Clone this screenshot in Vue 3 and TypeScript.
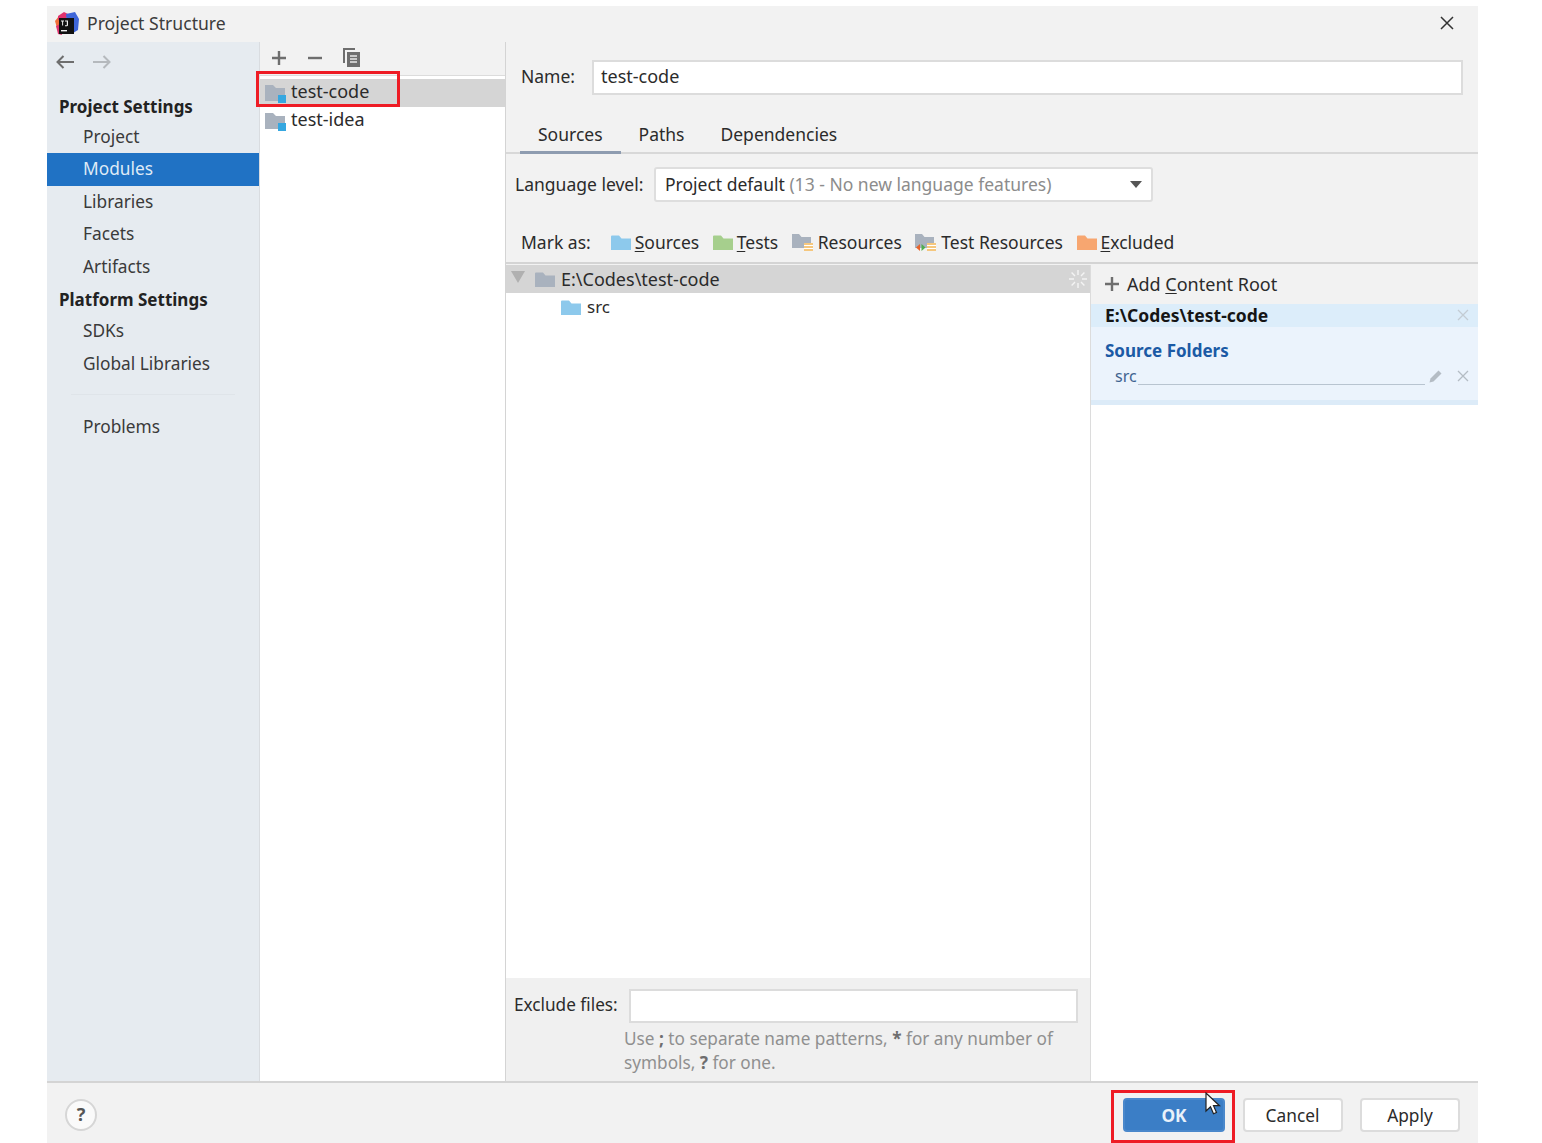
<script setup lang="ts">
interface NavItem {
  label: string;
  kind: "title" | "item" | "gap";
  active?: boolean;
}

const navItems: NavItem[] = [
  { label: "Project", kind: "item" },
  { label: "Modules", kind: "item", active: true },
  { label: "Libraries", kind: "item" },
  { label: "Facets", kind: "item" },
  { label: "Artifacts", kind: "item" },
  { label: "Platform Settings", kind: "title" },
  { label: "SDKs", kind: "item" },
  { label: "Global Libraries", kind: "item" },
  { label: "", kind: "gap" },
  { label: "Problems", kind: "item" },
];

const tabs = ["Sources", "Paths", "Dependencies"];

const folder = "M0 1.5A1 1 0 0 1 1 .5h7l2.5 3H20v11.5H0z";
</script>

<template>
  <div class="dialog">
    <header class="titlebar">
      <svg class="logo" width="24" height="24" viewBox="0 0 24 24">
        <path d="M0 9 4 4l3 1-1 10-4 1z" fill="#f0703a" />
        <path d="M3 4 9 0l4 2-2 6H3z" fill="#e0336e" />
        <path d="M11 2l9-2 4 7-1 11-5 3-6-10z" fill="#3f66d8" />
        <path d="M1 14l4-2 2 11-4-1z" fill="#e0336e" />
        <rect x="4" y="6" width="15" height="16" fill="#111" />
        <rect x="6" y="18" width="6" height="1.400" fill="#eee" />
        <path d="M6 8.500h3v1H8.100v4h-1v-4H6zM10 8.500h3v4.500a1.200 1.200 0 0 1-1.200 1.200H10v-1h1.800V9.500H10z" fill="#eee" />
      </svg>
      <span class="title-text">Project Structure</span>
      <svg class="close" width="16" height="16" viewBox="0 0 16 16">
        <path d="M2 2l12 12M14 2 2 14" stroke="#333" stroke-width="1.500" fill="none" />
      </svg>
    </header>

    <div class="body">
      <aside class="sidebar">
        <div class="history">
          <svg width="20" height="16" viewBox="0 0 20 16">
            <path d="M19 8H2M8.500 2 2.500 8l6 6" stroke="#6e6e6e" stroke-width="2" fill="none" />
          </svg>
          <svg width="20" height="16" viewBox="0 0 20 16">
            <path d="M1 8h17M11.500 2l6 6-6 6" stroke="#b5b9bd" stroke-width="2" fill="none" />
          </svg>
        </div>
        <div class="nav-title first">Project Settings</div>
        <template v-for="item in navItems" :key="item.label">
          <div v-if="item.kind === 'gap'" class="nav-gap"></div>
          <div v-else-if="item.kind === 'title'" class="nav-title">{{ item.label }}</div>
          <div v-else class="nav-item" :class="{ active: item.active }">{{ item.label }}</div>
        </template>
      </aside>

      <section class="modules">
        <div class="module-tools">
          <svg width="16" height="16" viewBox="0 0 16 16">
            <path d="M8 1v14M1 8h14" stroke="#6e6e6e" stroke-width="2.400" />
          </svg>
          <svg width="16" height="16" viewBox="0 0 16 16">
            <path d="M1 8h14" stroke="#6e6e6e" stroke-width="2.400" />
          </svg>
          <svg width="18" height="20" viewBox="0 0 18 20">
            <path d="M1 15V1h11" stroke="#6e6e6e" stroke-width="2" fill="none" />
            <path d="M4 4h13v15H4z" fill="#6e6e6e" />
            <path d="M7 8h7M7 11h7M7 14h7" stroke="#e8e8e8" stroke-width="1.300" />
          </svg>
        </div>
        <div class="module-row selected">
          <svg class="module-icon" width="22" height="20" viewBox="0 0 22 20">
            <path d="M0 2h8l3 3h9v13H0z" fill="#a9b2be" />
            <rect x="13" y="12" width="8" height="8" fill="#35a7e0" />
          </svg>
          <span>test-code</span>
        </div>
        <div class="module-row">
          <svg class="module-icon" width="22" height="20" viewBox="0 0 22 20">
            <path d="M0 2h8l3 3h9v13H0z" fill="#a9b2be" />
            <rect x="13" y="12" width="8" height="8" fill="#35a7e0" />
          </svg>
          <span>test-idea</span>
        </div>
        <div class="callout callout-module"></div>
      </section>

      <main class="detail">
        <div class="name-row">
          <label class="name-label">Name:</label>
          <div class="text-box name-box">test-code</div>
        </div>

        <nav class="tabs">
          <div v-for="(tab, i) in tabs" :key="tab" class="tab" :class="{ current: i === 0 }">{{ tab }}</div>
        </nav>

        <div class="lang-row">
          <label>Language level:</label>
          <div class="combo">
            <span class="combo-text">Project default <span class="muted">(13 - No new language features)</span></span>
            <i class="caret"></i>
          </div>
        </div>

        <div class="mark-row">
          <span class="mark-label">Mark as:</span>
          <span class="mark">
            <svg width="20" height="15" viewBox="0 0 20 15"><path :d="folder" fill="#8dc9ec" /></svg>
            <span><u>S</u>ources</span>
          </span>
          <span class="mark">
            <svg width="20" height="15" viewBox="0 0 20 15"><path :d="folder" fill="#a6cf8d" /></svg>
            <span><u>T</u>ests</span>
          </span>
          <span class="mark">
            <svg width="22" height="19" viewBox="0 0 22 19">
              <path d="M0 1h7l2.500 3H19v11H0z" fill="#a9b2be" />
              <path d="M12 10h9v8h-9z" fill="#f5c77e" />
              <path d="M12 12.500h9M12 15.500h9" stroke="#fff" />
            </svg>
            <span>Resources</span>
          </span>
          <span class="mark">
            <svg width="22" height="19" viewBox="0 0 22 19">
              <path d="M0 1h7l2.500 3H19v11H0z" fill="#a9b2be" />
              <path d="M12 10h9v8h-9z" fill="#f5c77e" />
              <path d="M12 12.500h9M12 15.500h9" stroke="#fff" />
              <path d="M5 11 1 14.500 5 18z" fill="#e8642c" />
              <path d="M6.500 11l4 3.500-4 3.500z" fill="#4fae4e" />
            </svg>
            <span>Test Resources</span>
          </span>
          <span class="mark">
            <svg width="20" height="15" viewBox="0 0 20 15"><path :d="folder" fill="#f7a670" /></svg>
            <span><u>E</u>xcluded</span>
          </span>
        </div>

        <div class="workspace">
          <div class="tree-col">
            <div class="tree-scroll">
              <div class="tree-row root">
                <i class="tree-caret"></i>
                <svg width="20" height="15" viewBox="0 0 20 15"><path :d="folder" fill="#a9b2be" /></svg>
                <span>E:\Codes\test-code</span>
                <svg class="spinner" width="20" height="20" viewBox="0 0 20 20">
                  <g stroke="#f4f4f4" stroke-width="1.400">
                    <path d="M10 1v5M10 14v5M1 10h5M14 10h5M3.600 3.600 7 7M13 13l3.400 3.400M16.400 3.600 13 7M7 13l-3.400 3.400" />
                  </g>
                </svg>
              </div>
              <div class="tree-row child">
                <svg width="20" height="15" viewBox="0 0 20 15"><path :d="folder" fill="#8dc9ec" /></svg>
                <span>src</span>
              </div>
            </div>
            <div class="exclude">
              <div class="exclude-line">
                <label>Exclude files:</label>
                <div class="text-box exclude-box"></div>
              </div>
              <div class="hint">
                <div>Use <b>;</b> to separate name patterns, <b>*</b> for any number of</div>
                <div>symbols, <b>?</b> for one.</div>
              </div>
            </div>
          </div>

          <div class="roots-col">
            <div class="add-root">
              <svg width="16" height="16" viewBox="0 0 16 16">
                <path d="M8 1v14M1 8h14" stroke="#6e6e6e" stroke-width="2.400" />
              </svg>
              <span>Add <u>C</u>ontent Root</span>
            </div>
            <div class="root-head">
              <span>E:\Codes\test-code</span>
              <svg width="12" height="12" viewBox="0 0 12 12">
                <path d="M1 1l10 10M11 1 1 11" stroke="#c3ccd4" stroke-width="1.300" />
              </svg>
            </div>
            <div class="root-body">
              <div class="source-title">Source Folders</div>
              <div class="source-line">
                <span class="source-name">src</span>
                <span class="source-rule"></span>
                <svg width="16" height="16" viewBox="0 0 16 16">
                  <path d="M1.500 14.500l1-4L10.500 2.500l3 3-8 8z" fill="#b4bcc4" />
                </svg>
                <svg width="12" height="12" viewBox="0 0 12 12">
                  <path d="M1 1l10 10M11 1 1 11" stroke="#b4bcc4" stroke-width="1.300" />
                </svg>
              </div>
            </div>
          </div>
        </div>
      </main>
    </div>

    <footer class="footer">
      <div class="help">?</div>
      <div class="buttons">
        <button class="btn primary">OK</button>
        <button class="btn">Cancel</button>
        <button class="btn">Apply</button>
      </div>
      <div class="callout callout-ok"></div>
      <svg class="cursor" width="16" height="24" viewBox="0 0 16 24">
        <path d="M1 1v18l4.500-4.200 3 7 3-1.300-3-6.800H14.500z" fill="#fff" stroke="#222" stroke-width="1.200" />
      </svg>
    </footer>
  </div>
</template>

<style>
html,
body {
  background: #fff;
  overflow: hidden;
}
</style>

<style scoped>
.dialog {
  box-sizing: border-box;
  width: 1431px;
  height: 1137px;
  margin: 6px 0 0 47px;
  display: flex;
  flex-direction: column;
  background: #f2f2f2;
  color: #2b2b2b;
  font-family: "Noto Sans", "Open Sans", sans-serif;
  font-size: 17.500px;
  position: relative;
}

svg {
  flex: none;
  display: block;
}

u {
  text-underline-offset: 2px;
}

.titlebar {
  height: 36px;
  flex: none;
  display: flex;
  align-items: center;
  padding: 0 23px 0 8px;
}

.logo {
  margin: -1px 8px 0 0;
}

.title-text {
  color: #3c3c3c;
  font-size: 17.600px;
  margin-bottom: 3px;
}

.close {
  margin: 0 0 2px auto;
}

.body {
  flex: 1;
  min-height: 0;
  display: flex;
}

.sidebar {
  width: 212px;
  flex: none;
  background: #e6ebf0;
  border-right: 1px solid #d9dce0;
  font-size: 17.300px;
}

.history {
  height: 48px;
  display: flex;
  align-items: center;
  gap: 17px;
  padding: 0 0 8px 8px;
  box-sizing: border-box;
}

.nav-title {
  height: 32.400px;
  line-height: 33.400px;
  padding-left: 12px;
  font-size: 17px;
  font-weight: 700;
  color: #222;
}

.nav-title.first {
  height: 31px;
  line-height: 33px;
}

.nav-item {
  height: 32.400px;
  line-height: 32.400px;
  padding-left: 36px;
  color: #3a3a3a;
}

.nav-item.active {
  background: #2072c4;
  color: #dfeaf6;
}

.nav-gap {
  height: 31px;
  margin: 0 24px 0 24px;
  box-sizing: border-box;
  border-bottom: 1px solid #dfe4e9;
  transform: translateY(-16px);
}

.modules {
  width: 245px;
  flex: none;
  background: #fff;
  border-right: 1px solid #d4d4d4;
  position: relative;
  font-size: 18px;
}

.module-tools {
  height: 34px;
  box-sizing: border-box;
  background: #f2f2f2;
  border-bottom: 1px solid #dcdcdc;
  display: flex;
  align-items: center;
  gap: 20px;
  padding: 0 0 1px 11px;
  margin-bottom: 3px;
}

.module-row {
  height: 28px;
  display: flex;
  align-items: center;
  gap: 4px;
  padding-left: 5px;
  color: #2b2b2b;
}

.module-row span {
  margin-bottom: 4px;
}

.module-row.selected {
  background: #d5d5d5;
}

.callout {
  position: absolute;
  border: 3px solid #ee1c25;
  box-sizing: border-box;
}

.callout-module {
  left: -4px;
  top: 29px;
  width: 144px;
  height: 36px;
}

.detail {
  flex: 1;
  min-width: 0;
  display: flex;
  flex-direction: column;
}

.name-row {
  height: 70px;
  flex: none;
  box-sizing: border-box;
  display: flex;
  align-items: center;
  padding: 0 15px 0 15px;
}

.name-label {
  width: 71px;
  margin-bottom: 2px;
}

.text-box {
  box-sizing: border-box;
  background: #fff;
  border: 2px solid #dcdcdc;
}

.name-box {
  flex: 1;
  height: 35px;
  line-height: 29px;
  padding-left: 7px;
  font-size: 18px;
}

.tabs {
  height: 42px;
  flex: none;
  box-sizing: border-box;
  display: flex;
  padding-left: 14px;
  border-bottom: 2px solid #d8d8d8;
}

.tab {
  padding: 0 18px;
  height: 42px;
  line-height: 44px;
  box-sizing: border-box;
}

.tab.current {
  border-bottom: 3px solid #8e9cb0;
}

.lang-row {
  height: 62px;
  flex: none;
  box-sizing: border-box;
  display: flex;
  align-items: center;
  padding: 0 0 1px 9px;
}

.lang-row label {
  flex: none;
  width: 139px;
  margin-bottom: 2px;
}

.combo {
  box-sizing: border-box;
  width: 499px;
  height: 35px;
  padding: 0 9px;
  background: #fff;
  border: 2px solid #dedede;
  border-radius: 3px;
  display: flex;
  align-items: center;
  justify-content: space-between;
}

.combo-text {
  margin-bottom: 1px;
}

.muted {
  color: #8c8c8c;
}

.caret {
  width: 0;
  height: 0;
  border-left: 6px solid transparent;
  border-right: 6px solid transparent;
  border-top: 7px solid #555;
}

.mark-row {
  height: 48px;
  flex: none;
  box-sizing: border-box;
  display: flex;
  align-items: center;
  padding: 7px 0 0 15px;
  border-bottom: 2px solid #d4d4d4;
}

.mark-label {
  margin: 0 20px 2px 0;
}

.mark {
  display: flex;
  align-items: center;
  gap: 4px;
  margin-right: 13.500px;
}

.mark span {
  margin-bottom: 2px;
}

.workspace {
  flex: 1;
  min-height: 0;
  display: flex;
  margin-top: 1px;
}

.tree-col {
  width: 585px;
  flex: none;
  display: flex;
  flex-direction: column;
  border-right: 1px solid #dcdcdc;
  box-sizing: border-box;
}

.tree-scroll {
  flex: 1;
  min-height: 0;
  background: #fff;
}

.tree-row {
  height: 28px;
  display: flex;
  align-items: center;
  gap: 6px;
}

.tree-row.root {
  background: #d5d5d5;
  padding-left: 5px;
  position: relative;
  font-size: 18px;
}

.tree-row.child {
  padding-left: 55px;
  font-size: 17px;
}

.tree-row.child span {
  margin-bottom: 2px;
}

.tree-caret {
  width: 0;
  height: 0;
  border-left: 7px solid transparent;
  border-right: 7px solid transparent;
  border-top: 12px solid #b0b0b0;
  margin: -4px 4px 0 0;
}

.spinner {
  margin-left: auto;
  margin-right: 2px;
}

.exclude {
  height: 103px;
  flex: none;
  box-sizing: border-box;
  background: #f0f0f0;
  padding: 11px 12px 0 8px;
  font-size: 17.200px;
}

.exclude-line {
  display: flex;
  align-items: center;
}

.exclude-line label {
  flex: none;
  width: 115px;
  margin-top: -3px;
}

.exclude-box {
  flex: 1;
  height: 34px;
}

.hint {
  margin: 4px 0 0 110px;
  line-height: 24px;
  color: #8f8f8f;
}

.hint b {
  color: #6e6e6e;
}

.roots-col {
  flex: 1;
  min-width: 0;
  background: #fff;
}

.add-root {
  height: 39px;
  box-sizing: border-box;
  background: #f2f2f2;
  display: flex;
  align-items: center;
  gap: 7px;
  padding: 0 0 1px 13px;
  font-size: 18px;
}

.root-head {
  height: 23px;
  box-sizing: border-box;
  display: flex;
  align-items: center;
  justify-content: space-between;
  padding: 0 9px 2px 14px;
  background: #dcedfa;
  font-weight: 700;
  color: #151515;
}

.root-body {
  height: 78px;
  box-sizing: border-box;
  background: #ebf3fc;
  border-bottom: 5px solid #dcebf8;
  padding: 10px 9px 0 14px;
}

.source-title {
  font-weight: 700;
  font-size: 17px;
  color: #1b5aa5;
  line-height: 27px;
}

.source-line {
  display: flex;
  align-items: center;
  height: 24px;
}

.source-name {
  margin-left: 10px;
  color: #3f6390;
  font-size: 16px;
}

.source-rule {
  flex: 1;
  align-self: flex-end;
  margin: 0 3px 3px 1px;
  border-bottom: 1px solid #b8c4d0;
}

.source-line svg:last-child {
  margin-left: 13px;
}

.footer {
  height: 62px;
  flex: none;
  box-sizing: border-box;
  border-top: 2px solid #d4d4d4;
  display: flex;
  align-items: center;
  justify-content: space-between;
  padding: 4px 18px 0 18px;
  position: relative;
}

.help {
  box-sizing: border-box;
  width: 32px;
  height: 32px;
  border-radius: 50%;
  border: 2px solid #d6d6d6;
  background: #fafafa;
  text-align: center;
  line-height: 27px;
  font-weight: 700;
  font-size: 18px;
  color: #555;
}

.buttons {
  display: flex;
  gap: 17.500px;
}

.btn {
  box-sizing: border-box;
  width: 100px;
  height: 34px;
  background: #fff;
  border: 2px solid #dcdcdc;
  border-radius: 4px;
  font-family: inherit;
  font-size: 17.300px;
  color: #2b2b2b;
  padding: 0;
}

.btn.primary {
  width: 102px;
  background: #3b7ec6;
  border-color: #4a88cb;
  color: #e8f1fa;
  font-weight: 700;
}

.callout-ok {
  left: 1064px;
  top: 7px;
  width: 124px;
  height: 53px;
}

.cursor {
  position: absolute;
  left: 1158px;
  top: 9px;
}
</style>
